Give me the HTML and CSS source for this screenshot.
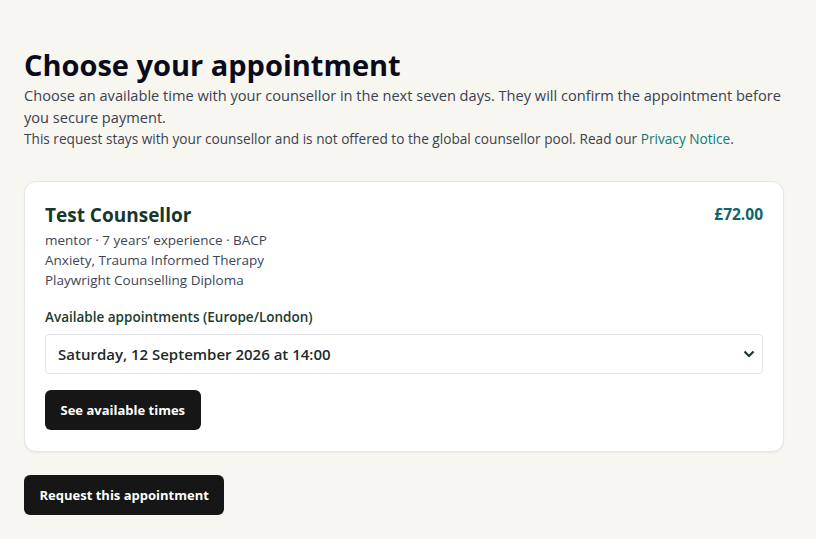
FILE: index.html
```html
<!DOCTYPE html>
<html lang="en">
  <head>
    <meta charset="UTF-8" />
    <meta name="viewport" content="width=device-width, initial-scale=1.0" />
    <title>Choose your appointment</title>
    <link rel="stylesheet" href="styles.css">
  </head>
  <body>
    <main class="page">
      <h1>Choose your appointment</h1>
      <p class="lead">Choose an available time with your counsellor in the next seven days. They will confirm the appointment before you secure payment.</p>
      <p class="note">This request stays with your counsellor and is not offered to the global counsellor pool. Read our <a href="#">Privacy Notice</a>.</p>

      <section class="card">
        <div class="card-head">
          <div>
            <h2>Test Counsellor</h2>
            <div class="meta">mentor · 7 years’ experience · BACP</div>
            <div class="meta">Anxiety, Trauma Informed Therapy</div>
            <div class="meta">Playwright Counselling Diploma</div>
          </div>
          <div class="price">£72.00</div>
        </div>

        <label class="field-label" for="slot">Available appointments (Europe/London)</label>
        <div class="select-wrap">
          <select id="slot">
            <option>Saturday, 12 September 2026 at 14:00</option>
          </select>
          <svg class="chevron" width="12" height="8" viewBox="0 0 12 8"><path d="M1.5 1.5 6 6l4.5-4.5" fill="none" stroke="#1c3a2e" stroke-width="2.2"/></svg>
        </div>
        <button class="btn" type="button">See available times</button>
      </section>

      <button class="btn" type="button">Request this appointment</button>
    </main>
  </body>
</html>
```

FILE: styles.css
```css
body {
  margin: 0;
  background: #f7f6f0;
  font-family: "Open Sans", sans-serif;
  color: #3b4150;
}
.page {
  max-width: 760px;
  padding: 47px 24px 24px;
}
h1 {
  margin: 0 0 2px;
  font-size: 29px;
  line-height: 35px;
  font-weight: 700;
  color: #0b0b1a;
}
.lead {
  margin: 0;
  font-size: 14.6px;
  line-height: 22px;
}
.note {
  margin: 0 0 31px;
  font-size: 13.65px;
  line-height: 22px;
}
.note a {
  color: #0f7a78;
  text-decoration: none;
}
.card {
  background: #fff;
  border: 1px solid #e3e6ea;
  border-radius: 12px;
  box-shadow: 0 1px 2px rgba(0, 0, 0, 0.06);
  padding: 20px 20px 21px;
  margin-bottom: 23px;
}
.card-head {
  display: flex;
  justify-content: space-between;
  align-items: flex-start;
  margin-bottom: 18px;
}
h2 {
  margin: 0 0 2px;
  font-size: 19px;
  line-height: 26px;
  color: #16382c;
}
.meta {
  font-size: 13.5px;
  line-height: 20px;
  color: #3e4555;
}
.price {
  font-size: 15.5px;
  font-weight: 700;
  color: #0d6466;
  padding-top: 1px;
}
.field-label {
  display: block;
  font-size: 13.5px;
  font-weight: 600;
  color: #1c3a2e;
  margin-bottom: 8px;
}
.select-wrap {
  position: relative;
  margin-bottom: 16px;
}
.select-wrap select {
  appearance: none;
  width: 100%;
  height: 40px;
  padding: 0 12px;
  border: 1px solid #e2e4e8;
  border-radius: 4px;
  background: #fff;
  font-family: inherit;
  font-size: 15px;
  font-weight: 600;
  color: #1c2a2a;
}
.chevron {
  position: absolute;
  right: 8px;
  top: 16px;
  pointer-events: none;
}
.btn {
  height: 40px;
  padding: 0 15.5px;
  border: 0;
  border-radius: 6px;
  background: #161616;
  color: #fff;
  font-family: inherit;
  font-size: 13px;
  font-weight: 700;
}
```
